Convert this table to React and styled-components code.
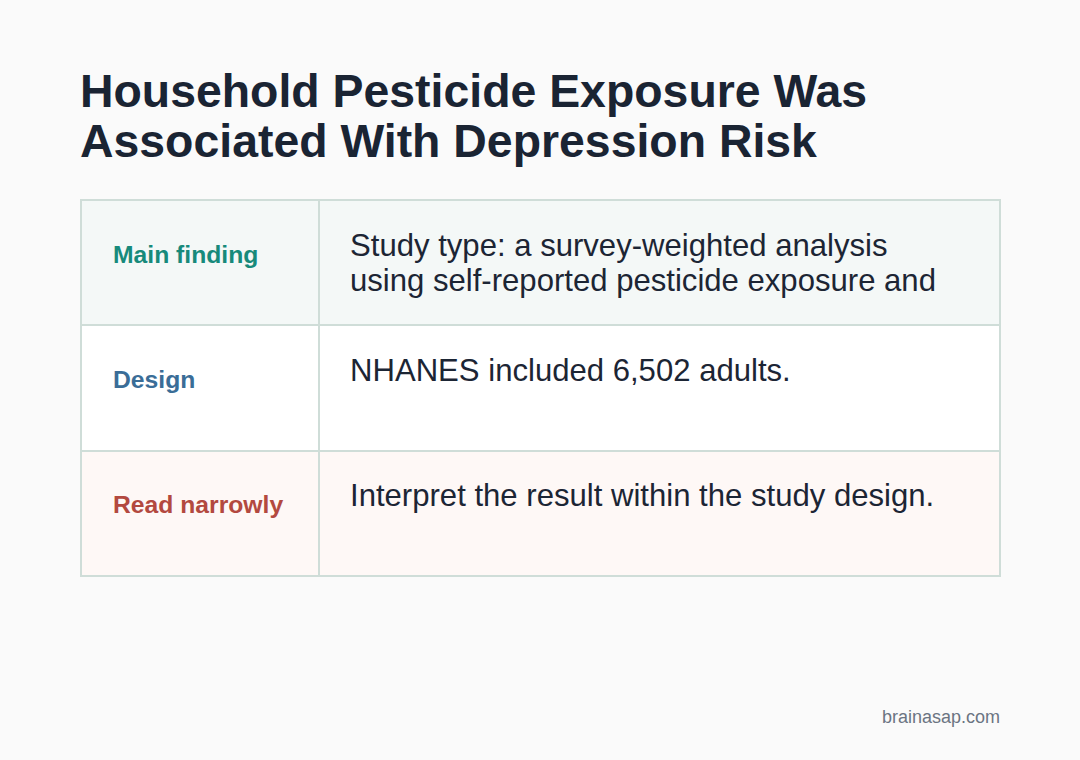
import React from 'react';
import styled, { createGlobalStyle } from 'styled-components';

const GlobalStyle = createGlobalStyle`
  html, body {
    margin: 0;
    padding: 0;
    background: #fafafa;
  }
  body {
    font-family: 'Liberation Sans', Arial, sans-serif;
  }
`

const Page = styled.div`
  box-sizing: border-box;
  min-height: 760px;
  display: flex;
  flex-direction: column;
  padding: 66px 79px 33px 80px;
  background: #fafafa;
`
const Title = styled.h1`
  margin: 0;
  font-size: 46.4px;
  line-height: 50px;
  font-weight: 700;
  color: #1a2433;
`
const Table = styled.div`
  margin-top: 33px;
  display: grid;
  grid-template-columns: 238px 1fr;
  border-top: 2px solid #cfddd8;
  border-left: 2px solid #cfddd8;
`
const Cell = styled.div`
  box-sizing: border-box;
  height: 125.3px;
  border-right: 2px solid #cfddd8;
  border-bottom: 2px solid #cfddd8;
  background: ${p => p.bg};
`
const LabelCell = styled(Cell)`
  padding: 38.5px 20px 0 31px;
`
const TextCell = styled(Cell)`
  padding: 26.5px 30px 0 30px;
`
const Label = styled.div`
  font-size: 24.7px;
  line-height: 29px;
  font-weight: 700;
  color: ${p => p.color};
`
const Body = styled.p`
  margin: 0;
  max-width: 604px;
  max-height: 72px;
  overflow: hidden;
  font-size: 31.1px;
  line-height: 35.5px;
  color: #1c2534;
`
const Footer = styled.div`
  margin-top: auto;
  margin-right: 1px;
  align-self: flex-end;
  font-size: 18px;
  line-height: 20px;
  color: #6b7482;
`

const rows = [
  {
    label: 'Main finding',
    color: '#178a7b',
    bg: '#f4f8f7',
    text: 'Study type: a survey-weighted analysis using self-reported pesticide exposure and',
  },
  {
    label: 'Design',
    color: '#3a6d97',
    bg: '#ffffff',
    text: 'NHANES included 6,502 adults.',
  },
  {
    label: 'Read narrowly',
    color: '#b3493f',
    bg: '#fef8f6',
    text: 'Interpret the result within the study design.',
  },
]

export default function App() {
  return (
    <Page>
      <GlobalStyle />
      <Title>
        Household Pesticide Exposure Was
        <br />
        Associated With Depression Risk
      </Title>
      <Table>
        {rows.map(row => (
          <React.Fragment key={row.label}>
            <LabelCell bg={row.bg}>
              <Label color={row.color}>{row.label}</Label>
            </LabelCell>
            <TextCell bg={row.bg}>
              <Body>{row.text}</Body>
            </TextCell>
          </React.Fragment>
        ))}
      </Table>
      <Footer>brainasap.com</Footer>
    </Page>
  )
}
